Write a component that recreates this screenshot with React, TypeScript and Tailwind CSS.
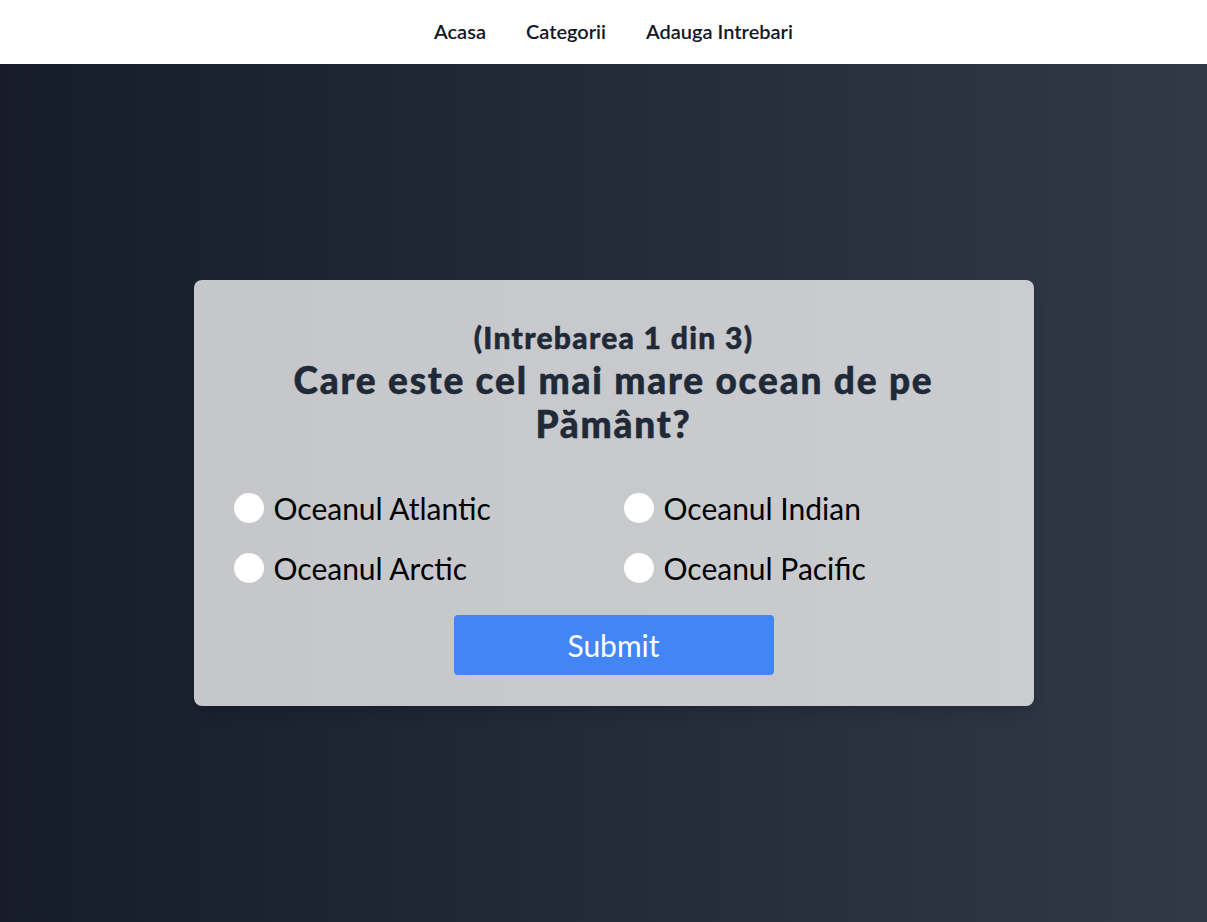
import { useState } from 'react'

const options = ['Oceanul Atlantic', 'Oceanul Indian', 'Oceanul Arctic', 'Oceanul Pacific']

export default function App() {
  const [selected, setSelected] = useState<string | null>(null)

  return (
    <div className="min-h-screen flex flex-col font-['Lato',sans-serif]">
      {/* Navbar */}
      <nav className="h-16 bg-white flex items-center justify-center pl-5 pb-0.5 gap-10 text-[20px] font-semibold text-[#111827]">
        <a href="#">Acasa</a>
        <a href="#">Categorii</a>
        <a href="#">Adauga Intrebari</a>
      </nav>

      {/* Main */}
      <main className="flex-1 flex items-center justify-center pl-5 bg-gradient-to-r from-[#161c2a] to-[#313947]">
        <div className="w-[840px] bg-white/75 rounded-lg shadow-lg px-10 pt-[39px] pb-[31px]">
          <div className="text-center text-[#1f2937] font-black [-webkit-text-stroke:0.5px_#1f2937]">
            <h2 className="text-[30px] leading-[36px] tracking-[1.3px]">(Intrebarea 1 din 3)</h2>
            <h1 className="text-[37px] leading-[44px] tracking-[1.8px] mt-[3px] px-10">
              Care este cel mai mare ocean de pe Pământ?
            </h1>
          </div>

          <div className="grid grid-cols-2 gap-x-5 gap-y-[30px] mt-[47px]">
            {options.map((opt) => (
              <label key={opt} className="flex items-center gap-2.5 cursor-pointer text-[30px] leading-[30px] text-black">
                <input
                  type="radio"
                  name="answer"
                  checked={selected === opt}
                  onChange={() => setSelected(opt)}
                  className="appearance-none w-[30px] h-[30px] rounded-full bg-white checked:border-[8px] checked:border-blue-500"
                />
                {opt}
              </label>
            ))}
          </div>

          <div className="flex justify-center mt-8">
            <button className="w-80 h-[60px] rounded bg-[#4285f5] text-white text-[30px]">Submit</button>
          </div>
        </div>
      </main>
    </div>
  )
}
